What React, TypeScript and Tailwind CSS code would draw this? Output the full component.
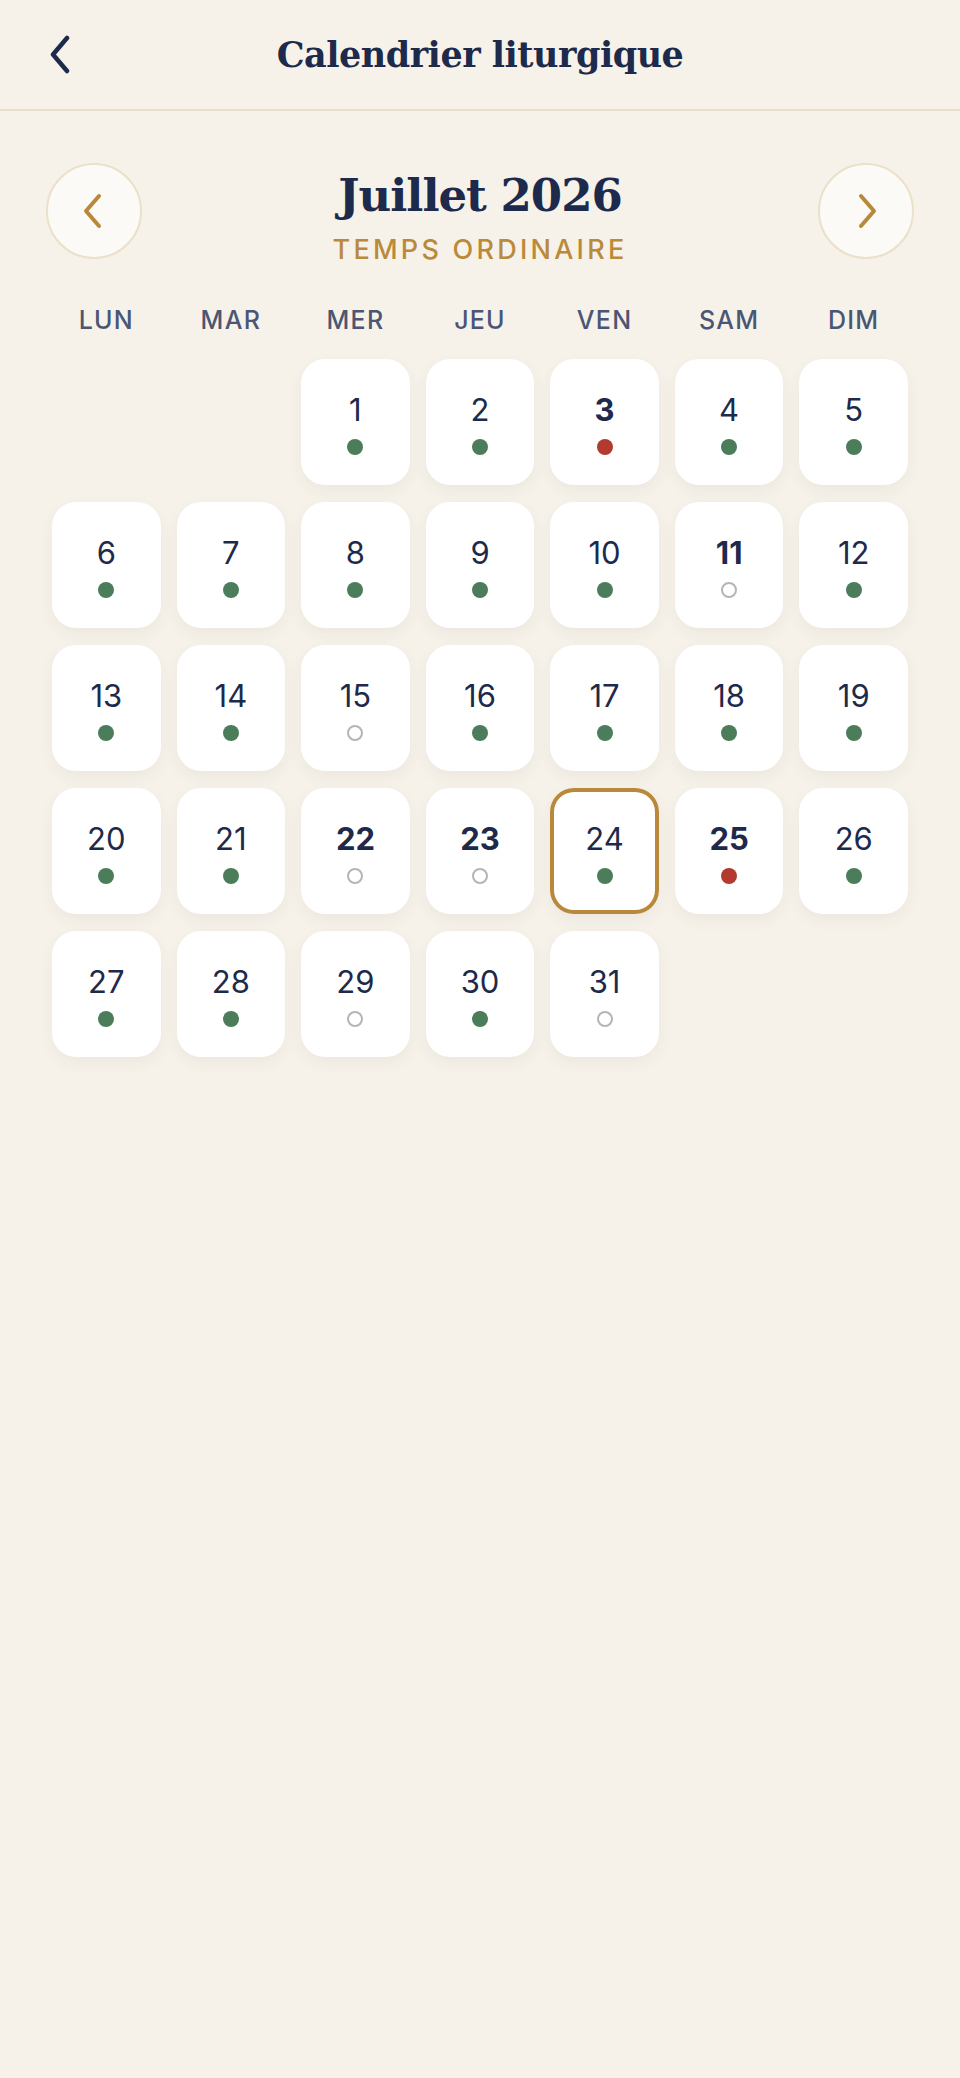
type Couleur = "vert" | "rouge" | "blanc";

type Jour = {
  numero: number;
  couleur: Couleur;
  fete?: boolean;
};

const JOURS_SEMAINE = ["LUN", "MAR", "MER", "JEU", "VEN", "SAM", "DIM"];

const BLANCS = [11, 15, 22, 23, 29, 31];
const ROUGES = [3, 25];
const FETES = [3, 11, 22, 23, 25];
const AUJOURDHUI = 24;

const jours: Jour[] = Array.from({ length: 31 }, (_, i) => {
  const numero = i + 1;
  let couleur: Couleur = "vert";
  if (BLANCS.includes(numero)) couleur = "blanc";
  if (ROUGES.includes(numero)) couleur = "rouge";
  return { numero, couleur, fete: FETES.includes(numero) };
});

function Pastille({ couleur }: { couleur: Couleur }) {
  if (couleur === "blanc") {
    return (
      <span className="block h-[16px] w-[16px] rounded-full border-2 border-[#b4b4ba] bg-white" />
    );
  }
  return (
    <span
      className={
        couleur === "rouge"
          ? "block h-[16px] w-[16px] rounded-full bg-[#b23a2f]"
          : "block h-[16px] w-[16px] rounded-full bg-[#4b7d5a]"
      }
    />
  );
}

function CaseJour({ jour }: { jour: Jour }) {
  const estAujourdhui = jour.numero === AUJOURDHUI;
  return (
    <button
      type="button"
      className={
        "flex h-[126px] flex-col items-center rounded-[24px] bg-white pt-[31px] shadow-[0_6px_16px_rgba(60,45,20,0.05)] " +
        (estAujourdhui ? "ring-4 ring-inset ring-[#b8893b]" : "")
      }
    >
      <span
        className={
          "text-[31px] leading-[40px] text-[#1d2a4b] " +
          (jour.fete ? "font-bold" : "font-normal")
        }
      >
        {jour.numero}
      </span>
      <span className="mt-[9px]">
        <Pastille couleur={jour.couleur} />
      </span>
    </button>
  );
}

export default function App() {
  return (
    <div className="min-h-screen bg-[#f6f2ea] font-['Inter','Liberation_Sans',sans-serif] text-[#1d2a4b]">
      <header className="grid h-[111px] grid-cols-[80px_1fr_80px] items-center border-b-2 border-[#e9dfca] px-[36px]">
        <button type="button" aria-label="Retour" className="flex h-[48px] w-[48px] items-center justify-center">
          <svg width="24" height="40" viewBox="0 0 24 40" fill="none">
            <path
              d="M19 3 L5 19.5 L19 36"
              stroke="#1d2a4b"
              strokeWidth="4.5"
              strokeLinecap="round"
              strokeLinejoin="round"
            />
          </svg>
        </button>
        <h1 className="text-center font-['DejaVu_Serif','Liberation_Serif',serif] text-[35px] font-bold leading-[44px] tracking-[-0.5px]">
          Calendrier liturgique
        </h1>
        <div />
      </header>

      <section className="flex items-start justify-between px-[46px] pt-[52px]">
        <button
          type="button"
          aria-label="Mois précédent"
          className="flex h-[96px] w-[96px] items-center justify-center rounded-full border-2 border-[#ebe0c8] bg-[#fcfaf6]"
        >
          <svg width="24" height="36" viewBox="0 0 24 36" fill="none">
            <path
              d="M17 3 L4 18 L17 33"
              stroke="#b8893b"
              strokeWidth="4"
              strokeLinecap="round"
              strokeLinejoin="round"
            />
          </svg>
        </button>

        <div className="mt-[3px] flex flex-col items-center">
          <h2 className="font-['DejaVu_Serif','Liberation_Serif',serif] text-[45px] font-bold leading-[60px] tracking-[-1px]">
            Juillet 2026
          </h2>
          <p className="mt-[8px] text-[27px] font-medium leading-[32px] tracking-[0.12em] text-[#b98a3a]">
            TEMPS ORDINAIRE
          </p>
        </div>

        <button
          type="button"
          aria-label="Mois suivant"
          className="flex h-[96px] w-[96px] items-center justify-center rounded-full border-2 border-[#ebe0c8] bg-[#fcfaf6]"
        >
          <svg width="24" height="36" viewBox="0 0 24 36" fill="none">
            <path
              d="M7 3 L20 18 L7 33"
              stroke="#b8893b"
              strokeWidth="4"
              strokeLinecap="round"
              strokeLinejoin="round"
            />
          </svg>
        </button>
      </section>

      <div className="mt-[39px] grid grid-cols-7 gap-x-[16px] px-[52px]">
        {JOURS_SEMAINE.map((nom) => (
          <div
            key={nom}
            className="text-center text-[25px] font-medium leading-[30px] tracking-[0.05em] text-[#4b5674]"
          >
            {nom}
          </div>
        ))}
      </div>

      <div className="mt-[24px] grid grid-cols-7 gap-x-[16px] gap-y-[17px] px-[52px]">
        <div />
        <div />
        {jours.map((jour) => (
          <CaseJour key={jour.numero} jour={jour} />
        ))}
      </div>
    </div>
  );
}
